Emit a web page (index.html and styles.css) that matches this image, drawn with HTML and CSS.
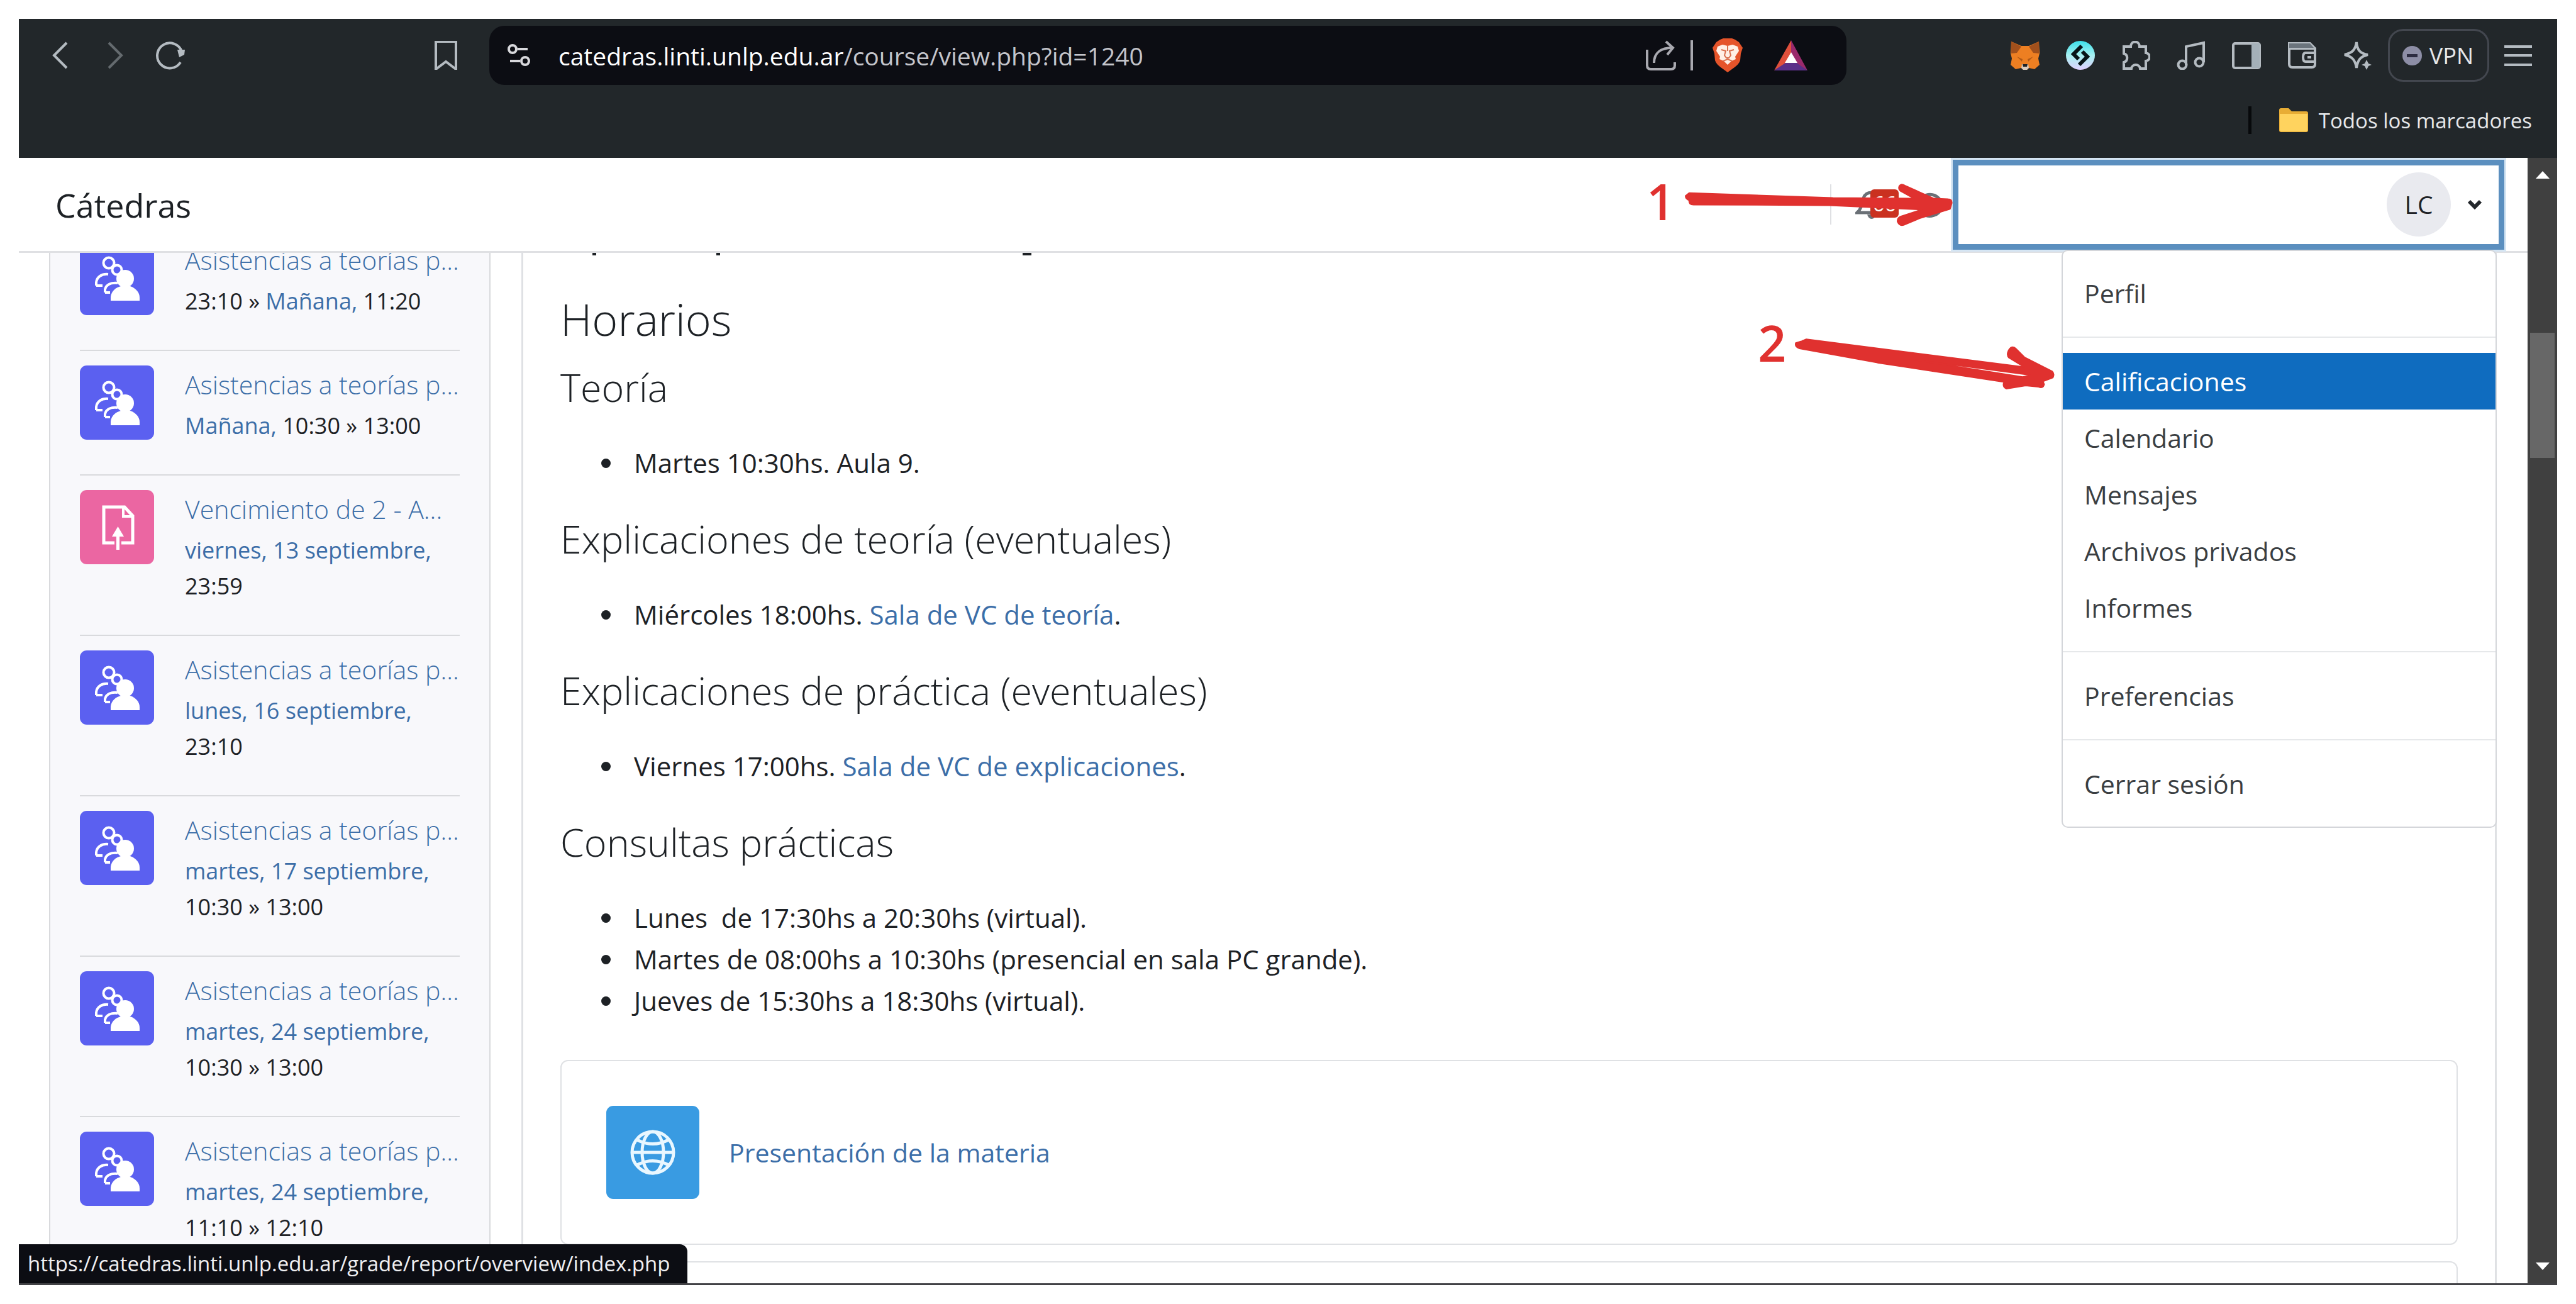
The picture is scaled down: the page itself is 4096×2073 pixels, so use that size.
FILE: index.html
```html
<!DOCTYPE html>
<html lang="es">
<head>
<meta charset="utf-8">
<title>Cátedras</title>
<link rel="stylesheet" href="styles.css">
</head>
<body>
<svg class="defs" aria-hidden="true">
  <symbol id="people" viewBox="0 0 118 118">
    <g fill="none" stroke="#fff" stroke-width="4">
      <circle cx="46" cy="35" r="8.5"/>
      <path d="M26 71V66C27 57 35 52 45 53M26 71H36"/>
      <circle cx="59" cy="46" r="7.5"/>
      <path d="M40 82V77C42 69 50 66 60 67M40 82H48"/>
    </g>
    <circle cx="72" cy="60" r="14" fill="#fff"/>
    <path d="M49 95V89C50 79 58 74 65 72L80 72C89 75 95 82 95 90V95Z" fill="#fff"/>
  </symbol>
  <symbol id="upload" viewBox="0 0 118 118">
    <g fill="none" stroke="#fff" stroke-width="5">
      <path d="M55 84H38V27H71L84 41V84H66"/>
      <path d="M69 27V42H84" stroke-width="4"/>
      <path d="M60.500 95V70"/>
    </g>
    <path d="M60.500 58L70 74H51Z" fill="#fff"/>
  </symbol>
</svg>
<div class="window">
  <header class="chrome">
    <div class="toolbar">
      <div class="nav-left">
        <button class="tool" aria-label="Atrás"><svg viewBox="0 0 46 46"><path d="M34 3L14 23L34 43" class="line"/></svg></button>
        <button class="tool dim" aria-label="Adelante"><svg viewBox="0 0 46 46"><path d="M13 3L33 23L13 43" class="line"/></svg></button>
        <button class="tool" aria-label="Recargar"><svg viewBox="0 0 46 46"><path d="M39 34A20 20 0 1 1 41 17" class="line"/><path d="M34 14L46 14L45 22L37 26Z" fill="#b4bbc1"/></svg></button>
        <button class="tool push" aria-label="Guardar marcador"><svg viewBox="0 0 46 46"><path d="M7 1H39V45L23 33L7 45Z" class="line"/></svg></button>
      </div>
      <div class="urlbar">
        <svg class="site" viewBox="0 0 36 36"><g fill="none" stroke="#d8d8dc" stroke-width="4"><circle cx="8" cy="8" r="6"/><path d="M16 8H32M4 27H20"/><circle cx="28" cy="27" r="6"/></g></svg>
        <span class="url"><b>catedras.linti.unlp.edu.ar</b>/course/view.php?id=1240</span>
        <button class="tool share" aria-label="Compartir"><svg viewBox="0 0 48 48"><g fill="none" stroke="#a9a9b0" stroke-width="4"><path d="M2 15V40Q2 46 8 46H40Q46 46 46 40V35"/><path d="M13 36C13 20 24 12 42 12"/><path d="M32 2L43 12L34 23"/></g></svg></button>
        <span class="bar"></span>
        <button class="tool shield" aria-label="Brave Shields"><svg viewBox="0 0 48 54"><path d="M12 2L17 0H31L36 2L42 6L48 15L45 24L44 35Q42 41 35 46L24 54L13 46Q6 41 4 35L3 24L0 15L6 6Z" fill="#e5542a"/><path d="M8 13L16 10L24 12L32 10L40 13L42 20L36 29L37 33L30 36L24 42L18 36L11 33L12 29L6 20Z" fill="#fff0e6"/><path d="M14 18L21 20L19 27L22 31H26L29 27L27 20L34 18M24 12V20M17 36L24 33L31 36" fill="none" stroke="#d9704e" stroke-width="2"/></svg></button>
        <button class="tool bat" aria-label="Brave Rewards"><svg viewBox="0 0 53 48"><path d="M27 0L0 48L27 32Z" fill="#e0503c"/><path d="M27 0L53 48L27 32Z" fill="#9a2a6c"/><path d="M0 48L27 30L53 48Z" fill="#5b3089"/><path d="M27 19L17 36H37Z" fill="#fff"/></svg></button>
      </div>
      <div class="nav-right">
        <button class="tool" aria-label="MetaMask"><svg viewBox="0 0 46 46"><path d="M1 1L17 8H29L45 1L46 20L44 28L46 38L38 45L29 43L26 46H20L17 43L8 45L0 38L2 28L0 20Z" fill="#ed7f22"/><path d="M1 1L17 9L10 19L1 20ZM45 1L29 9L36 19L45 20Z" fill="#a1501c"/><path d="M10 25L19 29L18 33ZM36 25L27 29L28 33Z" fill="#b25a16"/><path d="M18 37H28L29 43L26 46H20L17 43Z" fill="#d9cbbd"/><path d="M19 37H27L26 41H20Z" fill="#222"/></svg></button>
        <button class="tool" aria-label="Bitget"><svg viewBox="0 0 46 46"><defs><linearGradient id="bg1" x1="0" y1="0" x2="0" y2="1"><stop offset="0" stop-color="#3be0ea"/><stop offset=".5" stop-color="#a6f0f0"/><stop offset="1" stop-color="#e0d0ff"/></linearGradient></defs><circle cx="23" cy="23" r="23" fill="url(#bg1)"/><path d="M25 8L12 21L20 29M26 17L34 25L21 38" fill="none" stroke="#071418" stroke-width="6"/></svg></button>
        <button class="tool" aria-label="Extensiones"><svg viewBox="0 0 46 46"><path d="M4 9H15C15 -1 29 -1 29 9H39V19C47 20 47 31 39 32V44H30C29 36 17 36 16 44H4V34C11 32 11 22 4 20Z" class="line"/></svg></button>
        <button class="tool" aria-label="Multimedia"><svg viewBox="0 0 46 46"><g class="line"><circle cx="9" cy="38" r="6.500"/><circle cx="36" cy="34" r="6.500"/><path d="M15 38V9L43 3V34"/></g></svg></button>
        <button class="tool" aria-label="Panel lateral"><svg viewBox="0 0 46 46"><rect x="2" y="4" width="42" height="39" rx="3" class="line"/><rect x="31" y="4" width="13" height="39" fill="#a4b0b8"/></svg></button>
        <button class="tool" aria-label="Cartera"><svg viewBox="0 0 46 46"><path d="M3 4H36L44 12V37Q44 42 39 42H8Q3 42 3 37ZM3 12H44" class="line"/><path d="M3 4H36L42 11H3Z" fill="#6b747c"/><path d="M44 19H29Q25 19 25 26Q25 33 29 33H44M32 26H38" class="line"/></svg></button>
        <button class="tool" aria-label="Leo"><svg viewBox="0 0 46 46"><path d="M22 2C23 15 28 20 40 22C28 25 24 30 22 43C20 30 15 25 3 22C15 19 20 15 22 2Z" class="line"/><path d="M38 30L41 36L46 38L41 40L38 46L35 40L30 38L35 36Z" fill="#b4bbc1"/></svg></button>
        <button class="vpn"><svg viewBox="0 0 31 31"><circle cx="15.500" cy="15.500" r="15.500" fill="#8d8ea6"/><path d="M7 15.500H24" stroke="#2d2d42" stroke-width="5"/></svg>VPN</button>
        <button class="tool burger" aria-label="Menú"><svg viewBox="0 0 44 44"><path d="M0 8H44M0 22H44M0 37H44" class="line"/></svg></button>
      </div>
    </div>
    <div class="bookmarks">
      <span class="sep"></span>
      <a class="folder" href="#"><svg viewBox="0 0 46 38"><path d="M0 3Q0 0 3 0H15L20 5H43Q46 5 46 8V35Q46 38 43 38H3Q0 38 0 35Z" fill="#e8ad35"/><path d="M1 9H45V35Q45 37 43 37H3Q1 37 1 35Z" fill="#ffd35e"/></svg>Todos los marcadores</a>
    </div>
  </header>

  <div class="viewport">
    <div class="page">
      <nav class="navbar">
        <a class="brand" href="#">Cátedras</a>
        <div class="tools">
          <button class="bell" aria-label="Notificaciones"><svg viewBox="0 0 52 48"><path d="M3 37C10 31 11 22 13 14C15 8 20 5 26 5C32 5 37 8 39 14C41 22 42 31 49 37Z" fill="none" stroke="#6a7076" stroke-width="5"/><path d="M19 40H33Q31 47 26 47T19 40" fill="#6a7076"/></svg><span class="count">66</span></button>
          <button class="chat" aria-label="Mensajes"><svg viewBox="0 0 44 44"><path d="M12 37L6 42L7 32A19 17 0 1 1 12 37Z" fill="none" stroke="#6a7076" stroke-width="5"/></svg></button>
          <div class="usermenu">
            <button class="toggle" aria-label="Menú de usuario" aria-expanded="true"><span class="avatar">LC</span><svg viewBox="0 0 24 16"><path d="M3 3L12 12L21 3" fill="none" stroke="#23272b" stroke-width="6"/></svg></button>
            <div class="dropdown">
              <a href="#">Perfil</a>
              <hr>
              <a href="#" class="active">Calificaciones</a>
              <a href="#">Calendario</a>
              <a href="#">Mensajes</a>
              <a href="#">Archivos privados</a>
              <a href="#">Informes</a>
              <hr>
              <a href="#">Preferencias</a>
              <hr>
              <a href="#">Cerrar sesión</a>
            </div>
            <svg class="notes" viewBox="2650 290 680 350">
              <g fill="#e0312f" stroke="#e0312f" stroke-width="2" stroke-linejoin="round">
                <path d="M2719 316L2725 311L2957 319L3088 320L3066 308Q3062 305 3064 300Q3067 295 3073 299L3120 320L3143 321Q3149 321 3149 327L3146 337L3097 352L3071 363Q3064 365 3061 357Q3061 351 3066 349L3100 338L2952 331L2732 330Q2724 330 2725 323Q2719 321 2719 316Z"/>
                <path fill-rule="evenodd" d="M2897 553L2907 550L2914 547L3266 592L3241 577Q3237 573 3240 566Q3245 556 3252 562L3266 576L3311 599Q3315 603 3312 609L3296 615L3298 620Q3296 627 3289 624L3268 622L3237 627Q3230 624 3233 616L3029 585L2903 562Q2895 559 2897 553ZM3080 579L3263 608L3276 605Z"/>
              </g>
              <text x="2656" y="355">1</text>
              <text x="2836" y="583">2</text>
            </svg>
          </div>
        </div>
      </nav>

      <div class="content">
        <aside class="drawer">
          <div class="event"><span class="icon"><svg><use href="#people"/></svg></span><div><a class="title" href="#">Asistencias a teorías p...</a><p>23:10 » <a href="#">Mañana,</a> 11:20</p></div></div>
          <div class="event"><span class="icon"><svg><use href="#people"/></svg></span><div><a class="title" href="#">Asistencias a teorías p...</a><p><a href="#">Mañana,</a> 10:30 » 13:00</p></div></div>
          <div class="event"><span class="icon pink"><svg><use href="#upload"/></svg></span><div><a class="title" href="#">Vencimiento de 2 - A...</a><p><a href="#">viernes, 13 septiembre,</a><br>23:59</p></div></div>
          <div class="event"><span class="icon"><svg><use href="#people"/></svg></span><div><a class="title" href="#">Asistencias a teorías p...</a><p><a href="#">lunes, 16 septiembre,</a><br>23:10</p></div></div>
          <div class="event"><span class="icon"><svg><use href="#people"/></svg></span><div><a class="title" href="#">Asistencias a teorías p...</a><p><a href="#">martes, 17 septiembre,</a><br>10:30 » 13:00</p></div></div>
          <div class="event"><span class="icon"><svg><use href="#people"/></svg></span><div><a class="title" href="#">Asistencias a teorías p...</a><p><a href="#">martes, 24 septiembre,</a><br>10:30 » 13:00</p></div></div>
          <div class="event"><span class="icon"><svg><use href="#people"/></svg></span><div><a class="title" href="#">Asistencias a teorías p...</a><p><a href="#">martes, 24 septiembre,</a><br>11:10 » 12:10</p></div></div>
        </aside>
        <main class="course">
          <svg class="cut" viewBox="0 0 800 8" aria-hidden="true"><path d="M51 2H57M248 2H254M735 2H749" stroke="#1d2125" stroke-width="4"/></svg>
          <h3>Horarios</h3>
          <h4>Teoría</h4>
          <ul><li>Martes 10:30hs. Aula 9.</li></ul>
          <h4>Explicaciones de teoría (eventuales)</h4>
          <ul><li>Miércoles 18:00hs. <a href="#">Sala de VC de teoría</a>.</li></ul>
          <h4>Explicaciones de práctica (eventuales)</h4>
          <ul><li>Viernes 17:00hs. <a href="#">Sala de VC de explicaciones</a>.</li></ul>
          <h4>Consultas prácticas</h4>
          <ul>
            <li>Lunes&nbsp; de 17:30hs a 20:30hs (virtual).</li>
            <li>Martes de 08:00hs a 10:30hs (presencial en sala PC grande).</li>
            <li>Jueves de 15:30hs a 18:30hs (virtual).</li>
          </ul>
          <div class="card">
            <span class="globe"><svg viewBox="0 0 72 72"><g fill="none" stroke="#e9f7ff" stroke-width="5"><circle cx="36" cy="36" r="33"/><ellipse cx="36" cy="36" rx="17" ry="33"/><path d="M3 36H69M11 16Q36 29 61 16M11 56Q36 43 61 56"/></g></svg></span>
            <a href="#">Presentación de la materia</a>
          </div>
          <div class="card"></div>
        </main>
      </div>
    </div>
    <div class="scrollbar">
      <svg viewBox="0 0 22 12"><path d="M11 0L22 12H0Z" fill="#fff"/></svg>
      <span class="thumb"></span>
      <svg viewBox="0 0 22 12"><path d="M11 12L22 0H0Z" fill="#fff"/></svg>
    </div>
  </div>
  <div class="status">https://catedras.linti.unlp.edu.ar/grade/report/overview/index.php</div>
</div>
</body>
</html>
```

FILE: styles.css
```css
* { box-sizing: border-box; }
body {
  margin: 0;
  padding: 30px;
  height: 100vh;
  background: #fff;
  color: #1d2125;
  font-family: "Open Sans", "Noto Sans", sans-serif;
  font-size: 41px;
}
a { color: #3c6ea8; text-decoration: none; }
button { font: inherit; color: inherit; background: none; border: 0; padding: 0; margin: 0; }
svg { display: block; }
.defs { position: absolute; width: 0; height: 0; }

.window {
  position: relative;
  height: 100%;
  display: flex;
  flex-direction: column;
  overflow: hidden;
  border-bottom: 3px solid #424246;
}

/* Browser chrome */
.chrome { background: #22272a; color: #e6e8ea; flex: none; }
.toolbar {
  display: grid;
  grid-template-columns: 748px 1fr 1130px;
  padding-top: 11px;
  height: 105px;
}
.nav-left, .nav-right, .urlbar { display: flex; align-items: center; }
.nav-left { gap: 42px; padding: 0 46px 0 42px; }
.tool { width: 46px; flex: none; }
.tool svg { width: 100%; }
.line { fill: none; stroke: #b4bbc1; stroke-width: 4; }
.dim { opacity: 0.45; }
.push { margin-left: auto; }
.urlbar { background: #0c0d13; border-radius: 24px; padding: 0 62px 0 29px; }
.site { width: 36px; margin-right: 45px; }
.url { flex: 1; font-size: 39px; color: #c4c5cb; white-space: nowrap; }
.url b { font-weight: 400; color: #fff; }
.share { width: 48px; margin-right: 23px; }
.bar { width: 4px; height: 48px; background: #a9a9b0; margin-right: 31px; }
.shield { width: 48px; margin-right: 50px; }
.bat { width: 53px; }
.nav-right { justify-content: flex-end; gap: 42px; padding-right: 40px; }
.vpn {
  display: flex;
  align-items: center;
  gap: 12px;
  height: 84px;
  margin: 0 -18px 0 -16px;
  padding: 0 22px 0 20px;
  border: 3px solid #43474f;
  border-radius: 24px;
  font-size: 36px;
}
.vpn svg { width: 31px; }
.burger { width: 44px; }
.bookmarks {
  display: flex;
  align-items: center;
  justify-content: flex-end;
  gap: 44px;
  height: 116px;
  padding: 0 40px 4px 0;
  font-size: 33px;
}
.sep { width: 5px; height: 44px; background: #07090b; }
.folder { display: flex; align-items: center; gap: 17px; color: #e6e8ea; }
.folder svg { width: 46px; }

/* Page area */
.viewport { flex: 1; min-height: 0; display: flex; }
.page { flex: 1; min-width: 0; display: flex; flex-direction: column; background: #fff; }
.navbar {
  position: relative;
  z-index: 2;
  flex: none;
  display: flex;
  align-items: center;
  justify-content: space-between;
  height: 151px;
  padding: 0 37px 0 58px;
  border-bottom: 3px solid #dfe0e3;
}
.brand { font-size: 52px; color: #1d2125; }
.tools { display: flex; align-items: center; }
.bell {
  position: relative;
  display: flex;
  align-items: center;
  height: 64px;
  padding-left: 38px;
  border-left: 2px solid #dfe0e3;
}
.bell svg { width: 52px; }
.count {
  position: absolute;
  left: 62px;
  top: 8px;
  width: 45px;
  height: 45px;
  border-radius: 6px;
  background: #ca3120;
  color: #fff;
  font-size: 33px;
  line-height: 45px;
}
.chat { margin: 0 16px 0 43px; }
.chat svg { width: 44px; }
.usermenu { position: relative; }
.toggle {
  display: flex;
  align-items: center;
  justify-content: flex-end;
  gap: 26px;
  width: 877px;
  height: 143px;
  padding-right: 26px;
  border: 9px solid #5b8fbf;
  box-shadow: 0 0 0 3px #d5e5f3;
}
.avatar {
  width: 102px;
  height: 102px;
  border-radius: 50%;
  background: #e9eaef;
  font-size: 39px;
  line-height: 102px;
  text-align: center;
}
.toggle svg { width: 24px; }
.dropdown {
  position: absolute;
  top: 100%;
  right: 12px;
  width: 692px;
  padding: 22px 0 23px;
  background: #fff;
  border: 2px solid #d4d6da;
  border-radius: 10px;
}
.dropdown a { display: block; padding-left: 34px; line-height: 90px; color: #3a3e42; }
.dropdown .active { background: #0f6cbf; color: #fff; }
.dropdown hr { margin: 24px 0; border: 0; border-top: 2px solid #e6e8ea; }
.notes { position: absolute; right: 700px; top: 32px; width: 670px; overflow: visible; }
.notes text { font-size: 80px; font-weight: 600; fill: #e0312f; }

.content { flex: 1; min-height: 0; overflow: hidden; display: flex; align-items: flex-start; gap: 49px; padding: 0 49px 0 48px; }
.drawer {
  flex: none;
  width: 702px;
  margin-top: -44px;
  padding: 0 47px;
  background: #f8f8fb;
  border: solid #d9dadd;
  border-width: 0 2px;
}
.event {
  display: flex;
  gap: 49px;
  padding: 23px 0 49px;
  border-top: 2px solid #d9dadd;
  white-space: nowrap;
}
.icon { flex: none; width: 118px; height: 118px; border-radius: 11px; background: #5b60f0; }
.icon svg { width: 100%; height: 100%; }
.pink { background: #eb66a2; }
.title { display: block; font-size: 41px; font-weight: 300; line-height: 60px; }
.event p { margin: 7px 0 0; font-size: 36px; line-height: 57px; }

.course {
  flex: 1;
  min-width: 0;
  padding: 0 59px;
  border: solid #dfe1e4;
  border-width: 0 3px;
}
.cut { width: 800px; margin-bottom: 55px; }
h3, h4 { margin: 0; font-weight: 300; }
h3 { font-size: 70px; line-height: 84px; margin-bottom: 30px; }
h4 { font-size: 61px; line-height: 73px; }
ul { margin: 51px 0; padding-left: 102px; font-size: 42px; line-height: 66px; }
li { padding-left: 15px; }
.card {
  display: flex;
  align-items: center;
  gap: 47px;
  min-height: 294px;
  margin-top: 26px;
  padding: 71px;
  border: 2px solid #dfe1e4;
  border-radius: 12px;
}
ul + .card { margin-top: 61px; }
.globe {
  display: grid;
  place-items: center;
  width: 148px;
  height: 148px;
  border-radius: 11px;
  background: #399be2;
}
.globe svg { width: 72px; }

.scrollbar {
  flex: none;
  width: 47px;
  display: flex;
  flex-direction: column;
  align-items: center;
  padding: 21px 0;
  background: #404040;
}
.scrollbar svg { width: 22px; }
.thumb { width: 39px; height: 199px; margin: 245px 0 auto; background: #676767; }
.status {
  position: absolute;
  left: 0;
  bottom: 0;
  padding: 0 28px 0 14px;
  border-top-right-radius: 12px;
  background: #0c0d13;
  color: #f0f0f2;
  font-size: 33px;
  line-height: 62px;
}
```
